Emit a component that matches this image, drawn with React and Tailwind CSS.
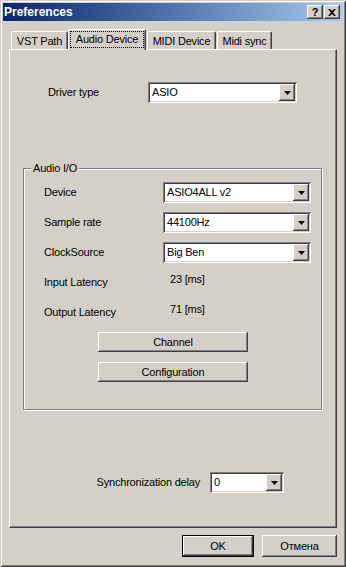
import React from "react";

const RAISED =
  "shadow-[inset_-1px_-1px_#404040,inset_1px_1px_#ffffff,inset_-2px_-2px_#808080,inset_2px_2px_#d4d0c8]";

function Arrow() {
  return (
    <svg width="7" height="4" viewBox="0 0 7 4" className="block">
      <polygon points="0,0 7,0 3.5,4" fill="#000" />
    </svg>
  );
}

function Combo({ value, className }) {
  return (
    <div
      className={`${className} h-[21px] bg-white p-[2px] flex shadow-[inset_1px_1px_#808080,inset_-1px_-1px_#ffffff,inset_2px_2px_#404040,inset_-2px_-2px_#d4d0c8]`}
    >
      <div className="flex-1 flex items-center pl-[2px] text-black">{value}</div>
      <div className={`w-[16px] h-[17px] bg-[#d4d0c8] flex items-center justify-center ${RAISED}`}>
        <Arrow />
      </div>
    </div>
  );
}

function Row({ label, children }) {
  return (
    <div className="flex items-center h-[21px]">
      <div className="w-[119px]">{label}</div>
      {children}
    </div>
  );
}

function Tab({ label, className, active }) {
  if (active) {
    return (
      <div
        className={`${className} h-[21px] -mb-[1px] relative z-10 bg-[#d4d0c8] border-l border-t border-r border-l-white border-t-white border-r-[#404040] rounded-t-[2px] shadow-[inset_-1px_0_#808080] p-[1px] pb-[2px]`}
      >
        <div className="h-full border border-dotted border-black flex items-center justify-center">
          {label}
        </div>
      </div>
    );
  }
  return (
    <div
      className={`${className} h-[18px] bg-[#d4d0c8] border-l border-t border-r border-l-white border-t-white border-r-[#404040] rounded-t-[2px] shadow-[inset_-1px_0_#808080] flex items-center justify-center pt-[1px]`}
    >
      {label}
    </div>
  );
}

export default function App() {
  return (
    <div className="w-[346px] h-[567px] bg-[#d4d0c8] p-[3px] flex flex-col text-[11px] leading-none tracking-[-0.2px] text-black font-['Liberation_Sans',Arial,sans-serif] shadow-[inset_1px_1px_#d4d0c8,inset_-1px_-1px_#404040,inset_2px_2px_#ffffff,inset_-2px_-2px_#808080] overflow-hidden select-none">
      {/* title bar */}
      <div className="h-[18px] flex items-center bg-gradient-to-r from-[#0a246a] to-[#a6caf0] pl-[1px] pr-[3px]">
        <div className="flex-1 text-white font-bold text-[12px] tracking-normal">Preferences</div>
        <div className={`w-[16px] h-[14px] bg-[#d4d0c8] flex items-center justify-center font-bold text-[11px] ${RAISED}`}>
          ?
        </div>
        <div className={`w-[16px] h-[14px] ml-[1px] bg-[#d4d0c8] flex items-center justify-center ${RAISED}`}>
          <svg width="8" height="7" viewBox="0 0 8 7" className="block">
            <path d="M0 0h2l2 2 2-2h2L5 3.5 8 7H6L4 5 2 7H0l3-3.5z" fill="#000" />
          </svg>
        </div>
      </div>

      {/* tabs + panel */}
      <div className="mt-[8px] px-[6px] flex flex-col">
        <div className="flex items-end pl-[2px]">
          <Tab label="VST Path" className="w-[57px]" />
          <Tab label="Audio Device" className="w-[78px]" active />
          <Tab label="MIDI Device" className="w-[69px] ml-[1px]" />
          <Tab label="Midi sync" className="w-[55px] ml-[1px]" />
        </div>

        <div className="h-[479px] border border-t-white border-l-white border-r-[#404040] border-b-[#404040] shadow-[inset_-1px_-1px_#808080] flex flex-col">
          {/* driver type */}
          <div className="mt-[32px] pl-[38px] flex items-center h-[21px]">
            <div className="w-[100px]">Driver type</div>
            <Combo value="ASIO" className="w-[149px]" />
          </div>

          {/* Audio I/O group */}
          <div className="relative mt-[65px] ml-[13px] w-[299px] h-[242px] border border-[#808080] shadow-[inset_1px_1px_#ffffff,1px_1px_#ffffff] pt-[13px] pl-[20px] flex flex-col gap-[9px]">
            <div className="absolute -top-[6px] left-[7px] px-[2px] bg-[#d4d0c8]">Audio I/O</div>
            <Row label="Device">
              <Combo value="ASIO4ALL v2" className="w-[148px]" />
            </Row>
            <Row label="Sample rate">
              <Combo value="44100Hz" className="w-[148px]" />
            </Row>
            <Row label="ClockSource">
              <Combo value="Big Ben" className="w-[148px]" />
            </Row>
            <div className="flex items-center h-[21px]">
              <div className="w-[126px]">Input Latency</div>
              <div className="mb-[7px]">23 [ms]</div>
            </div>
            <div className="flex items-center h-[21px]">
              <div className="w-[126px]">Output Latency</div>
              <div className="mb-[7px]">71 [ms]</div>
            </div>
            <div className="flex flex-col gap-[10px] pl-[54px]">
              <div className={`w-[150px] h-[20px] bg-[#d4d0c8] flex items-center justify-center ${RAISED}`}>
                Channel
              </div>
              <div className={`w-[150px] h-[20px] bg-[#d4d0c8] flex items-center justify-center ${RAISED}`}>
                Configuration
              </div>
            </div>
          </div>

          {/* sync delay */}
          <div className="mt-[62px] pl-[88px] flex items-center h-[21px]">
            <div className="w-[102px] flex justify-end whitespace-nowrap">Synchronization delay</div>
            <Combo value="0" className="w-[74px] ml-[10px]" />
          </div>
        </div>

        {/* bottom buttons */}
        <div className="mt-[7px] flex justify-end">
          <div className="w-[72px] h-[22px] border border-black">
            <div className={`w-full h-full bg-[#d4d0c8] flex items-center justify-center ${RAISED}`}>OK</div>
          </div>
          <div className={`w-[75px] h-[22px] ml-[8px] bg-[#d4d0c8] flex items-center justify-center ${RAISED}`}>
            Отмена
          </div>
        </div>
      </div>
    </div>
  );
}
